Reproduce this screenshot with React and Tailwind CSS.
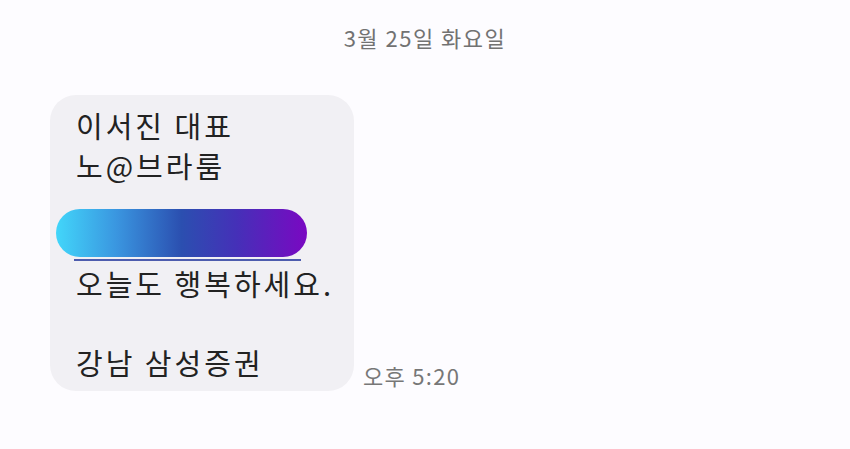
import React from 'react';

const font = { fontFamily: '"Noto Sans CJK KR", "Noto Sans", sans-serif' };

export default function App() {
  return (
    <div
      className="w-[850px] h-[449px] bg-[#fdfcff] overflow-hidden"
      style={font}
    >
      {/* date divider */}
      <div className="pt-[22px] text-center text-[22px] leading-[30px] tracking-[1.5px] text-[#727272]">
        3월 25일 화요일
      </div>

      {/* message row */}
      <div className="flex items-end gap-[9px] mt-[43px] pl-[50px]">
        <div className="w-[304px] h-[296px] rounded-[26px] bg-[#f1f0f4] pl-[26px] pt-[11px] text-[29px] leading-[39.5px] tracking-[3px] text-[#222222]">
          <div>이서진 대표</div>
          <div>노@브라룸</div>
          {/* redacted link */}
          <div className="h-[79px] pt-[24px]">
            <div className="ml-[-20px] w-[251px] h-[48px] rounded-full bg-[linear-gradient(90deg,#42d6fa_0%,#3a96e0_24%,#2b4fb0_50%,#4530b8_72%,#7a08c2_100%)]" />
            <div className="mt-[2px] ml-[-2px] w-[227px] h-[2px] bg-[#4d5cae]" />
          </div>
          <div>오늘도 행복하세요.</div>
          <div>&nbsp;</div>
          <div>강남 삼성증권</div>
        </div>
        <div className="pb-[1px] text-[22px] leading-[30px] tracking-[1.3px] text-[#777777]">오후 5:20</div>
      </div>
    </div>
  );
}
